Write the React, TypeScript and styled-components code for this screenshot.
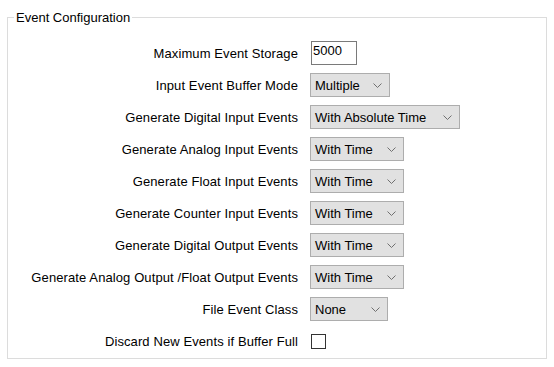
import React from 'react';
import { styled, createGlobalStyle } from 'styled-components';

const GlobalStyle = createGlobalStyle`
  body {
    margin: 0;
    background: #ffffff;
    font-family: "Liberation Sans", Arial, sans-serif;
    font-size: 13px;
    color: #000000;
  }
`

const Group = styled.fieldset`
  margin: 10px 7px 0 7px;
  width: 540px;
  box-sizing: border-box;
  height: 349px;
  padding: 0;
  border: 1px solid #dcdcdc;
`

const GroupTitle = styled.legend`
  margin-left: 6px;
  padding: 0 2px;
  font-size: 13px;
  line-height: 15px;
`

const FormGrid = styled.div`
  display: grid;
  grid-template-columns: 290px 1fr;
  grid-auto-rows: 32px;
  column-gap: 12px;
  padding-top: 12px;
  align-items: center;
`

const Label = styled.div`
  text-align: right;
  white-space: nowrap;
  line-height: 15px;
  letter-spacing: 0.1px;
`

const NumberInput = styled.div`
  width: 46px;
  height: 24px;
  margin-left: 1px;
  box-sizing: border-box;
  border: 1px solid #7a7a7a;
  background: #ffffff;
  padding: 1px 0 0 1px;
  line-height: 15px;
`

const Dropdown = styled.div<{ $width: number }>`
  width: ${props => props.$width}px;
  height: 24px;
  box-sizing: border-box;
  border: 1px solid #adadad;
  background: #e1e1e1;
  display: flex;
  align-items: center;
  justify-content: space-between;
  padding: 0 7px 0 4px;
  white-space: nowrap;
`

const Check = styled.div`
  width: 15px;
  height: 15px;
  margin-left: 1px;
  box-sizing: border-box;
  border: 1px solid #333333;
  background: #ffffff;
`

const Chevron = () => (
  <svg width="9" height="5" viewBox="0 0 9 5">
    <polyline points="0.5,0.5 4.5,4.5 8.5,0.5" fill="none" stroke="#707070" strokeWidth="1" />
  </svg>
)

type Row = { label: string, value?: string, width?: number, kind: 'input' | 'select' | 'check' }

const rows: Row[] = [
  { label: 'Maximum Event Storage', value: '5000', kind: 'input' },
  { label: 'Input Event Buffer Mode', value: 'Multiple', width: 80, kind: 'select' },
  { label: 'Generate Digital Input Events', value: 'With Absolute Time', width: 150, kind: 'select' },
  { label: 'Generate Analog Input Events', value: 'With Time', width: 94, kind: 'select' },
  { label: 'Generate Float Input Events', value: 'With Time', width: 94, kind: 'select' },
  { label: 'Generate Counter Input Events', value: 'With Time', width: 94, kind: 'select' },
  { label: 'Generate Digital Output Events', value: 'With Time', width: 94, kind: 'select' },
  { label: 'Generate Analog Output /Float Output Events', value: 'With Time', width: 94, kind: 'select' },
  { label: 'File Event Class', value: 'None', width: 78, kind: 'select' },
  { label: 'Discard New Events if Buffer Full', kind: 'check' },
]

export default function App() {
  return (
    <>
      <GlobalStyle />
      <Group>
        <GroupTitle>Event Configuration</GroupTitle>
        <FormGrid>
          {rows.map(row => (
            <React.Fragment key={row.label}>
              <Label>{row.label}</Label>
              {row.kind === 'input' && <NumberInput>{row.value}</NumberInput>}
              {row.kind === 'select' && (
                <Dropdown $width={row.width ?? 80}>
                  <span>{row.value}</span>
                  <Chevron />
                </Dropdown>
              )}
              {row.kind === 'check' && <Check />}
            </React.Fragment>
          ))}
        </FormGrid>
      </Group>
    </>
  )
}
